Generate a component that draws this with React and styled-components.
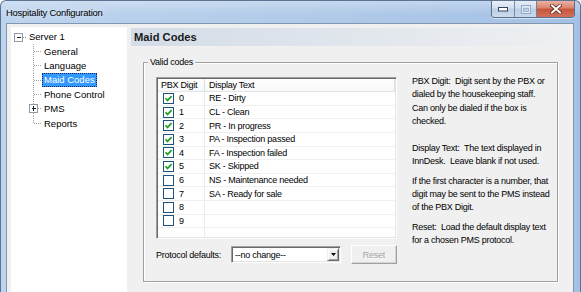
import React from "react";
import styled, { createGlobalStyle } from "styled-components";

const GlobalStyle = createGlobalStyle`
  html, body { margin: 0; padding: 0; }
  body {
    width: 581px; height: 292px; overflow: hidden; background: #fff;
    font-family: "Liberation Sans", Arial, sans-serif;
  }
  * { box-sizing: border-box; }
`;

const Window = styled.div`
  width: 581px;
  height: 292px;
  display: flex;
  flex-direction: column;
  padding: 0 6px 0 5px;
  border: 1px solid #5d7391;
  border-bottom: none;
  border-radius: 6px 6px 0 0;
  background:
    linear-gradient(180deg, rgba(255,255,255,0.28) 0px, rgba(255,255,255,0) 14px),
    linear-gradient(90deg, #bdd4ee 0%, #b3cce9 45%, #a4c1e5 100%);
  overflow: hidden;
`;

const TitleBar = styled.div`
  height: 22px;
  flex: none;
  display: flex;
  align-items: flex-start;
  margin-right: -1px;
`;

const Title = styled.div`
  align-self: center;
  font-size: 9.4px;
  letter-spacing: -0.2px;
  color: #000;
  text-shadow: 0 0 6px rgba(255,255,255,0.9);
  padding-top: 1px;
`;

const CaptionButtons = styled.div`
  margin-left: auto;
  display: flex;
  height: 17px;
  border: 1px solid #5a6f8c;
  border-top: none;
  border-radius: 0 0 4px 4px;
  overflow: hidden;
  box-shadow: 0 1px 0 rgba(255,255,255,0.5);
`;

const CapBtn = styled.div`
  width: ${(p) => p.$w}px;
  height: 100%;
  display: flex;
  align-items: center;
  justify-content: center;
  border-left: ${(p) => (p.$first ? "none" : "1px solid #6f84a2")};
  background: ${(p) =>
    p.$close
      ? "linear-gradient(180deg, #eab1a3 0%, #d9826c 45%, #c6543b 50%, #d2715a 100%)"
      : "linear-gradient(180deg, #e9f0f8 0%, #d2dfee 45%, #bccfe6 50%, #cddbed 100%)"};
  opacity: ${(p) => (p.$disabled ? 0.9 : 1)};
`;

const Client = styled.div`
  flex: 1;
  min-height: 0;
  display: flex;
  gap: 4px;
  padding: 3px 2px 0 4px;
  background: #f0f0f0;
  border: 1px solid #8396b0;
  border-bottom: none;
`;

const Tree = styled.div`
  width: 116px;
  flex: none;
  background: #fff;
  padding: 2.5px 0 0 1px;
  font-size: 9.5px;
  color: #000;
`;

const TreeRow = styled.div`
  height: 14.4px;
  display: flex;
  align-items: center;
  padding-left: ${(p) => p.$level * 15}px;
`;

const TreeLabel = styled.span`
  height: 13.6px;
  display: flex;
  align-items: center;
  padding: 0 1px;
  border: 1px ${(p) => (p.$selected ? "dotted #0a2a5a" : "solid transparent")};
  background: ${(p) => (p.$selected ? "#3399ff" : "transparent")};
  color: ${(p) => (p.$selected ? "#fff" : "#000")};
  white-space: nowrap;
`;

const Content = styled.div`
  flex: 1;
  min-width: 0;
  display: flex;
  flex-direction: column;
  padding-top: 1px;
`;

const Header = styled.div`
  height: 18px;
  flex: none;
  display: flex;
  align-items: center;
  padding-left: 3px;
  font-size: 11.2px;
  font-weight: bold;
  color: #1a1a1a;
  background: linear-gradient(90deg, #d3dce7 0%, #e2e7ed 55%, #eef0f2 100%);
`;

const Group = styled.div`
  position: relative;
  margin: 16px 13px 0 12px;
  padding: 14px 12px 17px 12px;
  border: 1px solid #a0a0a0;
  box-shadow: inset 1px 1px 0 #fff, 1px 1px 0 #fff;
  display: flex;
  gap: 15px;
  font-size: 9px;
  letter-spacing: -0.25px;
  color: #000;
`;

const Legend = styled.span`
  position: absolute;
  top: -6.5px;
  left: 4px;
  padding: 0 2px;
  line-height: 11px;
  background: #f0f0f0;
`;

const LeftCol = styled.div`
  width: 241px;
  flex: none;
  display: flex;
  flex-direction: column;
`;

const ListView = styled.div`
  height: 162px;
  display: flex;
  flex-direction: column;
  background: #fff;
  border: 1px solid;
  border-color: #a0a0a0 #fff #fff #a0a0a0;
  box-shadow: inset 1px 1px 0 #696969, inset -1px -1px 0 #e3e3e3;
  padding: 1px;
`;

const ListHeader = styled.div`
  height: 13.2px;
  flex: none;
  display: flex;
  background: linear-gradient(180deg, #ffffff 0%, #f7f8f9 100%);
  border-bottom: 1px solid #e5e5e5;
`;

const HeadCell = styled.div`
  width: ${(p) => (p.$w ? `${p.$w}px` : "auto")};
  flex: ${(p) => (p.$w ? "none" : "1")};
  display: flex;
  align-items: center;
  padding-left: ${(p) => p.$pad}px;
  border-right: 1px solid #dedede;
  white-space: nowrap;
`;

const ListRow = styled.div`
  height: ${(p) => (p.$filler ? "auto" : "13.6px")};
  flex: ${(p) => (p.$filler ? "1" : "none")};
  display: flex;
  border-bottom: ${(p) => (p.$filler ? "none" : "1px solid #f0f0f0")};
`;

const DigitCell = styled.div`
  width: 47px;
  flex: none;
  display: flex;
  align-items: center;
  gap: 5px;
  padding-left: 5px;
  border-right: 1px solid #ebebeb;
`;

const TextCell = styled.div`
  flex: 1;
  display: flex;
  align-items: center;
  padding-left: 4px;
  white-space: nowrap;
`;

const CheckBox = styled.span`
  width: 11px;
  height: 11px;
  flex: none;
  border: 1px solid #1c5180;
  background: #fff;
  display: flex;
  align-items: center;
  justify-content: center;
`;

const ProtocolRow = styled.div`
  margin-top: 6px;
  height: 19px;
  display: flex;
  align-items: center;
`;

const ProtoLabel = styled.span`
  width: 75px;
  flex: none;
  white-space: nowrap;
`;

const Combo = styled.div`
  width: 110px;
  height: 17px;
  display: flex;
  align-items: center;
  background: #fff;
  border: 1px solid;
  border-color: #a0a0a0 #fff #fff #a0a0a0;
  box-shadow: inset 1px 1px 0 #696969, inset -1px -1px 0 #e3e3e3;
  padding: 1px;
`;

const ComboText = styled.span`
  flex: 1;
  padding-left: 2px;
  white-space: nowrap;
`;

const ComboButton = styled.span`
  width: 12px;
  height: 100%;
  display: flex;
  align-items: center;
  justify-content: center;
  background: #f0f0f0;
  border: 1px solid;
  border-color: #f0f0f0 #696969 #696969 #f0f0f0;
  box-shadow: inset 1px 1px 0 #fff, inset -1px -1px 0 #a0a0a0;
`;

const Button = styled.div`
  margin-left: 10px;
  width: 46px;
  height: 19px;
  display: flex;
  align-items: center;
  justify-content: center;
  background: #f0f0f0;
  border: 1px solid;
  border-color: #fff #a0a0a0 #a0a0a0 #fff;
  box-shadow: inset -1px -1px 0 #d4d4d4;
  color: ${(p) => (p.$disabled ? "#a0a0a0" : "#000")};
  text-shadow: ${(p) => (p.$disabled ? "1px 1px 0 #fff" : "none")};
`;

const Help = styled.div`
  flex: 1;
  margin-top: -2px;
  line-height: 13.3px;
  white-space: pre;
`;

const HelpPara = styled.p`
  margin: 0 0 ${(p) => p.$after}px 0;
`;

const Connector = ({ level, box, last }) => (
  <svg width="15" height="14.4" viewBox="0 0 15 14.4" style={{ flex: "none", display: "block" }}>
    {level > 0 && (
      <line x1="6.5" y1="0" x2="6.5" y2={last ? 7.5 : 14.4} stroke="#a0a0a0" strokeDasharray="1 1" />
    )}
    <line x1={box ? 11 : 7} y1="7.5" x2="15" y2="7.5" stroke="#a0a0a0" strokeDasharray="1 1" />
    {box && (
      <g shapeRendering="crispEdges">
        <rect x="2.5" y="3.5" width="8" height="8" fill="#fff" stroke="#8f9aa8" />
        <line x1="4.5" y1="7.5" x2="9" y2="7.5" stroke="#1e1e1e" />
        {box === "plus" && <line x1="6.5" y1="5.5" x2="6.5" y2="10" stroke="#1e1e1e" />}
      </g>
    )}
  </svg>
);

const Check = () => (
  <svg width="9" height="9" viewBox="0 0 9 9">
    <polyline points="1.5,4.2 3.5,6.4 7.6,2.2" fill="none" stroke="#21a121" strokeWidth="1.7" />
  </svg>
);

const treeItems = [
  { label: "Server 1", level: 0, box: "minus" },
  { label: "General", level: 1 },
  { label: "Language", level: 1 },
  { label: "Maid Codes", level: 1, selected: true },
  { label: "Phone Control", level: 1 },
  { label: "PMS", level: 1, box: "plus" },
  { label: "Reports", level: 1, last: true },
];

const codes = [
  { d: "0", t: "RE - Dirty", c: true },
  { d: "1", t: "CL - Clean", c: true },
  { d: "2", t: "PR - In progress", c: true },
  { d: "3", t: "PA - Inspection passed", c: true },
  { d: "4", t: "FA - Inspection failed", c: true },
  { d: "5", t: "SK - Skipped", c: true },
  { d: "6", t: "NS - Maintenance needed", c: false },
  { d: "7", t: "SA - Ready for sale", c: false },
  { d: "8", t: "", c: false },
  { d: "9", t: "", c: false },
];

const helpParas = [
  { text: "PBX Digit:  Digit sent by the PBX or\ndialed by the housekeeping staff.\nCan only be dialed if the box is\nchecked.", after: 13.4 },
  { text: "Display Text:  The text displayed in\nInnDesk.  Leave blank if not used.", after: 6.7 },
  { text: "If the first character is a number, that\ndigit may be sent to the PMS instead\nof the PBX Digit.", after: 5.8 },
  { text: "Reset:  Load the default display text\nfor a chosen PMS protocol.", after: 0 },
];

export default function App() {
  return (
    <>
      <GlobalStyle />
      <Window>
        <TitleBar>
          <Title>Hospitality Configuration</Title>
          <CaptionButtons>
            <CapBtn $w={22} $first>
              <svg width="10" height="5" viewBox="0 0 10 5">
                <rect x="0.5" y="0.5" width="9" height="3.5" fill="#fff" stroke="#34465e" />
              </svg>
            </CapBtn>
            <CapBtn $w={22} $disabled>
              <svg width="10" height="9" viewBox="0 0 10 9">
                <rect x="0.5" y="0.5" width="9" height="8" fill="none" stroke="#8ea3bf" />
                <rect x="1.5" y="1.5" width="7" height="6" fill="none" stroke="#e8eef6" />
                <rect x="2.5" y="3.5" width="5" height="3" fill="none" stroke="#9fb2ca" />
              </svg>
            </CapBtn>
            <CapBtn $w={38} $close>
              <svg width="12" height="10" viewBox="0 0 12 10">
                <path d="M2 1.5 L10 8.5 M10 1.5 L2 8.5" stroke="#5a2418" strokeWidth="3.6" strokeLinecap="square" />
                <path d="M2 1.5 L10 8.5 M10 1.5 L2 8.5" stroke="#fff" strokeWidth="2" strokeLinecap="square" />
              </svg>
            </CapBtn>
          </CaptionButtons>
        </TitleBar>
        <Client>
          <Tree>
            {treeItems.map((it) => (
              <TreeRow key={it.label} $level={it.level}>
                <Connector level={it.level} box={it.box} last={it.last} />
                <TreeLabel $selected={it.selected}>{it.label}</TreeLabel>
              </TreeRow>
            ))}
          </Tree>
          <Content>
            <Header>Maid Codes</Header>
            <Group>
              <Legend>Valid codes</Legend>
              <LeftCol>
                <ListView>
                  <ListHeader>
                    <HeadCell $w={47} $pad={3}>PBX Digit</HeadCell>
                    <HeadCell $pad={4}>Display Text</HeadCell>
                  </ListHeader>
                  {codes.map((r) => (
                    <ListRow key={r.d}>
                      <DigitCell>
                        <CheckBox>{r.c && <Check />}</CheckBox>
                        <span>{r.d}</span>
                      </DigitCell>
                      <TextCell>{r.t}</TextCell>
                    </ListRow>
                  ))}
                  <ListRow $filler>
                    <DigitCell />
                    <TextCell />
                  </ListRow>
                </ListView>
                <ProtocolRow>
                  <ProtoLabel>Protocol defaults:</ProtoLabel>
                  <Combo>
                    <ComboText>--no change--</ComboText>
                    <ComboButton>
                      <svg width="5" height="3" viewBox="0 0 5 3">
                        <path d="M0 0 H5 L2.5 3 Z" fill="#000" />
                      </svg>
                    </ComboButton>
                  </Combo>
                  <Button $disabled>Reset</Button>
                </ProtocolRow>
              </LeftCol>
              <Help>
                {helpParas.map((p, i) => (
                  <HelpPara key={i} $after={p.after}>{p.text}</HelpPara>
                ))}
              </Help>
            </Group>
          </Content>
        </Client>
      </Window>
    </>
  );
}
